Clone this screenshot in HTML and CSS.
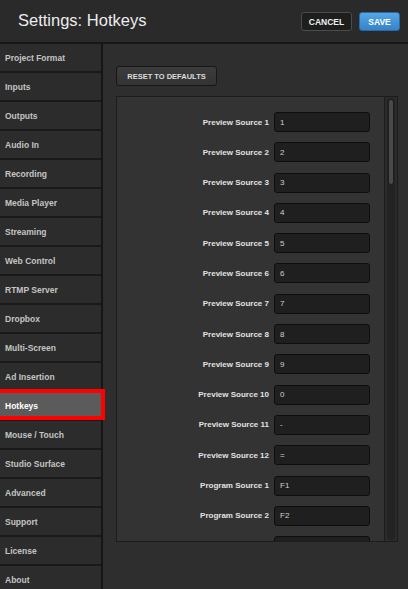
FILE: index.html
```html
<!DOCTYPE html>
<html>
<head>
<meta charset="utf-8">
<link rel="stylesheet" href="styles.css">
</head>
<body>
<header class="header">
  <h1 class="title">Settings: Hotkeys</h1>
  <div class="actions">
    <button class="btn btn-cancel">CANCEL</button>
    <button class="btn btn-save">SAVE</button>
  </div>
</header>
<div class="body">
  <nav class="sidebar">
    <div class="nav-item">Project Format</div>
    <div class="nav-item">Inputs</div>
    <div class="nav-item">Outputs</div>
    <div class="nav-item">Audio In</div>
    <div class="nav-item">Recording</div>
    <div class="nav-item">Media Player</div>
    <div class="nav-item">Streaming</div>
    <div class="nav-item">Web Control</div>
    <div class="nav-item">RTMP Server</div>
    <div class="nav-item">Dropbox</div>
    <div class="nav-item">Multi-Screen</div>
    <div class="nav-item">Ad Insertion</div>
    <div class="nav-item active">Hotkeys</div>
    <div class="nav-item">Mouse / Touch</div>
    <div class="nav-item">Studio Surface</div>
    <div class="nav-item">Advanced</div>
    <div class="nav-item">Support</div>
    <div class="nav-item">License</div>
    <div class="nav-item">About</div>
  </nav>
  <main class="main">
    <button class="btn btn-reset">RESET TO DEFAULTS</button>
    <div class="panel">
      <div class="rows">
        <label class="lbl">Preview Source 1</label><div class="field">1</div>
        <label class="lbl">Preview Source 2</label><div class="field">2</div>
        <label class="lbl">Preview Source 3</label><div class="field">3</div>
        <label class="lbl">Preview Source 4</label><div class="field">4</div>
        <label class="lbl">Preview Source 5</label><div class="field">5</div>
        <label class="lbl">Preview Source 6</label><div class="field">6</div>
        <label class="lbl">Preview Source 7</label><div class="field">7</div>
        <label class="lbl">Preview Source 8</label><div class="field">8</div>
        <label class="lbl">Preview Source 9</label><div class="field">9</div>
        <label class="lbl">Preview Source 10</label><div class="field">0</div>
        <label class="lbl">Preview Source 11</label><div class="field">-</div>
        <label class="lbl">Preview Source 12</label><div class="field">=</div>
        <label class="lbl">Program Source 1</label><div class="field">F1</div>
        <label class="lbl">Program Source 2</label><div class="field">F2</div>
        <span class="lbl"></span><div class="field"></div>
      </div>
      <div class="scrollbar">
        <div class="groove"><div class="thumb"></div></div>
      </div>
    </div>
  </main>
</div>
</body>
</html>
```

FILE: styles.css
```css
* { box-sizing: border-box; }
html, body {
  margin: 0;
  padding: 0;
  width: 408px;
  height: 589px;
  overflow: hidden;
  background: #2e2e2e;
  font-family: "Liberation Sans", Arial, sans-serif;
}
.header {
  height: 44px;
  background: #2a2a2a;
  border-bottom: 2px solid #171717;
  display: flex;
  align-items: flex-start;
  justify-content: space-between;
  padding: 0 8px 0 18px;
}
.title {
  margin: 9px 0 0 0;
  font-weight: normal;
  font-size: 16.5px;
  line-height: 22px;
  color: #ececec;
}
.actions {
  display: flex;
  gap: 7px;
  margin-top: 12px;
}
.btn {
  font-family: "Liberation Sans", Arial, sans-serif;
  font-weight: bold;
  font-size: 8.5px;
  height: 19px;
  padding: 0;
  border-radius: 3px;
  cursor: pointer;
}
.btn-cancel {
  width: 51px;
  color: #f0f0f0;
  background: #1e1e1e;
  border: 1px solid #4c4c4c;
}
.btn-save {
  width: 41px;
  color: #ffffff;
  background: linear-gradient(#55a6e6, #3583c9);
  border: 1px solid #2a6aa3;
}
.body {
  display: flex;
  height: 545px;
}
.sidebar {
  width: 103px;
  flex: none;
  background: #2c2c2c;
  border-right: 2px solid #161616;
  display: flex;
  flex-direction: column;
}
.nav-item {
  position: relative;
  flex: none;
  height: 29px;
  border-bottom: 2px solid #191919;
  padding-left: 5px;
  display: flex;
  align-items: center;
  font-size: 8.5px;
  font-weight: bold;
  color: #c4c4c4;
}
.nav-item.active {
  background: #5b5b5b;
  color: #ffffff;
}
.nav-item.active::after {
  content: "";
  position: absolute;
  left: -4px;
  right: -4px;
  top: -3px;
  bottom: -1px;
  border: 4px solid #ff0000;
}
.main {
  flex: 1;
  display: flex;
  flex-direction: column;
  align-items: flex-start;
  padding: 22px 10px 0 13px;
  background: #2e2e2e;
}
.btn-reset {
  width: 101px;
  height: 20px;
  color: #dcdcdc;
  font-size: 7.5px;
  background: linear-gradient(#3c3c3c, #333333);
  border: 1px solid #171717;
}
.panel {
  margin-top: 10px;
  width: 282px;
  height: 446px;
  background: #333333;
  border: 1px solid #1c1c1c;
  display: flex;
  overflow: hidden;
}
.rows {
  flex: 1;
  display: grid;
  grid-template-columns: 152px 96px;
  column-gap: 5px;
  row-gap: 10.3px;
  grid-auto-rows: 20px;
  padding-top: 15px;
  align-content: start;
}
.lbl {
  justify-self: end;
  align-self: center;
  font-size: 8px;
  font-weight: bold;
  color: #e2e2e2;
  white-space: nowrap;
}
.field {
  height: 20px;
  background: #1f1f1f;
  border: 1px solid #0e0e0e;
  border-radius: 3px;
  padding-left: 5px;
  display: flex;
  align-items: center;
  font-size: 8px;
  color: #cfcfcf;
}
.scrollbar {
  width: 13px;
  flex: none;
  border-left: 1px solid #1d1d1d;
  background: #2b2b2b;
  padding: 1px 2px;
}
.groove {
  height: 100%;
  background: #232323;
  border-radius: 4px;
  padding: 1px 1px;
}
.thumb {
  height: 86px;
  background: #4a4a4a;
  border: 1px solid #1c1c1c;
  border-radius: 3px;
}
```
